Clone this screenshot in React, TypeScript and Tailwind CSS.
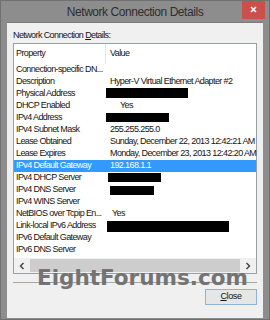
import React from "react";

type Row = {
  p: string;
  v?: string;
  box?: string;
  vClass?: string;
  selected?: boolean;
};

const rows: Row[] = [
  { p: "Connection-specific DN..." },
  { p: "Description", v: "Hyper-V Virtual Ethernet Adapter #2" },
  { p: "Physical Address", box: "ml-[-4px] w-[82px] h-[10px] -mt-[2px]" },
  { p: "DHCP Enabled", v: "Yes", vClass: "pl-[10px]" },
  { p: "IPv4 Address", box: "ml-[-4px] w-[63px] h-[9px] -mt-[1px]" },
  { p: "IPv4 Subnet Mask", v: "255.255.255.0" },
  { p: "Lease Obtained", v: "Sunday, December 22, 2013 12:42:21 AM" },
  { p: "Lease Expires", v: "Monday, December 23, 2013 12:42:20 AM" },
  { p: "IPv4 Default Gateway", v: "192.168.1.1", selected: true },
  { p: "IPv4 DHCP Server", box: "ml-[-2px] w-[53px] h-[9px] -mt-[1px]" },
  { p: "IPv4 DNS Server", box: "w-[44px] h-[9px]" },
  { p: "IPv4 WINS Server" },
  { p: "NetBIOS over Tcpip En...", v: "Yes", vClass: "pl-[2px]" },
  { p: "Link-local IPv6 Address", box: "ml-[-3px] w-[122px] h-[11px]" },
  { p: "IPv6 Default Gateway" },
  { p: "IPv6 DNS Server" },
];

function Chevron({ dir }: { dir: "left" | "right" }) {
  return (
    <svg width="6" height="8" viewBox="0 0 6 8">
      <path
        d={dir === "left" ? "M4.5 1 L1.5 4 L4.5 7" : "M1.5 1 L4.5 4 L1.5 7"}
        fill="none"
        stroke="#404040"
        strokeWidth="1.4"
      />
    </svg>
  );
}

export default function App() {
  return (
    <div className="relative flex h-[320px] w-[270px] flex-col overflow-hidden border border-[#707070] bg-[#8d8d8d] font-['Liberation_Sans',Arial,sans-serif] text-[#141414]">
      {/* Title bar */}
      <div className="relative flex h-[21px] shrink-0 items-center justify-center">
        <span className="text-[12px] tracking-[-0.45px] text-[#2e2e2e]">Network Connection Details</span>
        <div className="absolute right-[4px] top-[-1px] flex h-[19px] w-[23px] items-center justify-center bg-[#c9504b]">
          <svg width="7" height="7" viewBox="0 0 7 7">
            <path d="M1 1 L6 6 M6 1 L1 6" stroke="#fff" strokeWidth="1.6" />
          </svg>
        </div>
      </div>

      {/* Client area */}
      <div className="mx-[6px] mb-[2px] flex flex-1 flex-col border-t border-[#7a7a7a] bg-[#f0f0f0] px-[6px] pb-[13px] pt-[6px]">
        <div className="h-[12px] text-[9px] leading-[12px] tracking-[-0.6px]">
          Network Connection <span className="underline">D</span>etails:
        </div>

        {/* List view */}
        <div className="mt-[2px] flex h-[231px] flex-col border border-[#9a9ea6] bg-white text-[9px] tracking-[-0.6px]">
          <div className="flex h-[20px] shrink-0 items-center">
            <div className="w-[91px] pl-[2px]">Property</div>
            <div className="h-full w-px bg-[#e5e5e5]" />
            <div className="pl-[4px]">Value</div>
          </div>
          {rows.map((r) => (
            <div
              key={r.p}
              className={
                r.selected
                  ? "flex h-[12px] items-center whitespace-nowrap bg-[#3399ff] text-white"
                  : "flex h-[12px] items-center whitespace-nowrap"
              }
            >
              <div className="w-[96px] shrink-0 pl-[2px]">{r.p}</div>
              {r.box ? (
                <div className={"bg-black " + r.box} />
              ) : (
                <div className={r.vClass ?? ""}>{r.v}</div>
              )}
            </div>
          ))}
          <div className="flex-1" />
          {/* Horizontal scrollbar */}
          <div className="flex h-[15px] shrink-0 bg-[#f0f0f0]">
            <div className="flex w-[16px] items-center justify-center">
              <Chevron dir="left" />
            </div>
            <div className="my-[1px] flex-1 bg-[#cdcdcd]" />
            <div className="flex w-[16px] items-center justify-center">
              <Chevron dir="right" />
            </div>
          </div>
        </div>

        <div className="mt-[8px] h-px bg-[#a6a6a6]" />

        <div className="mt-[6px] flex justify-end">
          <button className="flex h-[16px] w-[52px] items-center justify-center border border-[#8fb4d8] bg-[#e6e6e6] text-[9px] tracking-[-0.4px] text-[#141414]">
            <span className="underline">C</span>lose
          </button>
        </div>
      </div>

      {/* Watermark */}
      <div className="pointer-events-none absolute left-[36px] top-[266px] font-['DejaVu_Sans',sans-serif] text-[21.5px] font-bold leading-[21px] text-[#6e6e6e] opacity-95">
        EightForums.com
      </div>
    </div>
  );
}
